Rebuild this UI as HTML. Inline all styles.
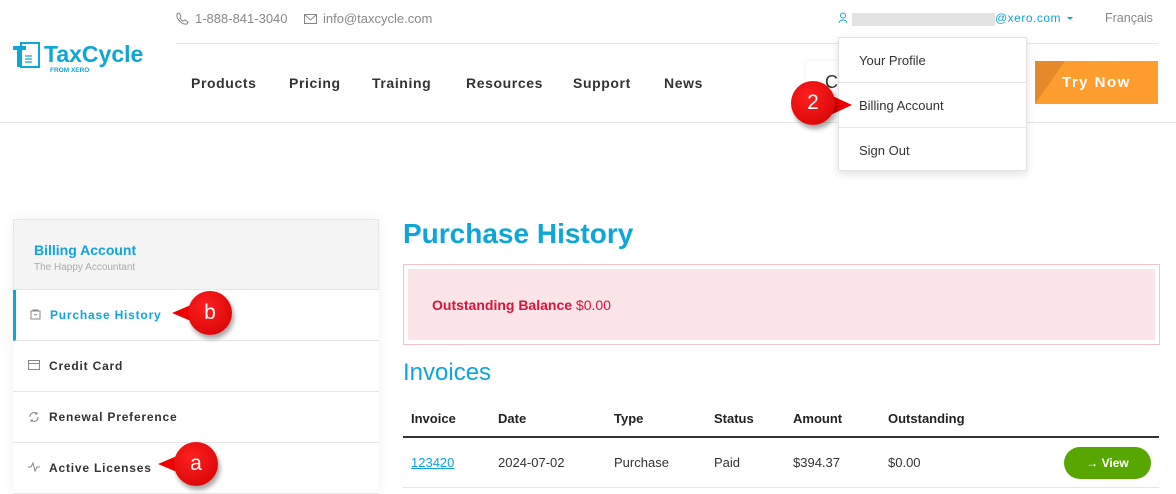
<!DOCTYPE html>
<html><head><meta charset="utf-8"><style>
*{box-sizing:border-box;margin:0;padding:0}
body{width:1176px;height:494px;overflow:hidden;background:#fff;font-family:"Liberation Sans",sans-serif;position:relative;color:#333}
.a{position:absolute}
.nav{font-size:14px;font-weight:bold;letter-spacing:.6px;color:#333;top:75px}
.side{left:13px;width:366px;border-bottom:1px solid #e6e6e6;background:#fff;height:51px}
.side span{position:absolute;left:36px;top:18px;font-size:12px;font-weight:bold;letter-spacing:.8px;color:#333}
.side svg{position:absolute;left:15px;top:19px}
.th{top:411px;font-size:13px;font-weight:bold;color:#222}
.td{top:455px;font-size:13px;color:#333}
.badge{position:absolute;width:44px;height:44px;border-radius:50%;color:#fff;font-size:21px;text-align:center;line-height:44px;box-shadow:2px 4px 5px rgba(0,0,0,.35);background:radial-gradient(circle at 40% 35%,#ff2020,#d00000)}
</style></head><body>
<div class="a" style="left:0;top:122px;width:1176px;height:1px;background:#e6e6e6"></div>
<div class="a" style="left:176px;top:43px;width:982px;height:1px;background:#e6e6e6"></div>
<svg class="a" style="left:13px;top:42px" width="28" height="28" viewBox="0 0 28 28"><rect x="8" y="1" width="18" height="24" fill="none" stroke="#0ea5d8" stroke-width="2"/><rect x="0" y="4" width="13" height="4" fill="#0ea5d8"/><rect x="4" y="4" width="4" height="21" fill="#0ea5d8"/><path d="M12 14h7M12 17h7M12 20h7" stroke="#0ea5d8" stroke-width="1.3"/></svg>
<div class="a" style="left:44px;top:41px;font-size:23px;color:#0ea5d8;font-weight:bold">TaxCycle</div>
<div class="a" style="left:50px;top:67px;font-size:6.5px;color:#0ea5d8;font-weight:bold">FROM XERO</div>
<svg class="a" style="left:176px;top:12px" width="13" height="13" viewBox="0 0 13 13"><path d="M3 1l2 3-1 2c1 2 2 3 3 3l2-1 3 2-1 2C6 13 0 7 1 2z" fill="none" stroke="#888" stroke-width="1"/></svg>
<div class="a" style="left:195px;top:11px;font-size:13px;color:#888">1-888-841-3040</div>
<svg class="a" style="left:304px;top:14px" width="13" height="10"><rect x=".5" y=".5" width="12" height="9" fill="none" stroke="#888"/><path d="M1 1l5.5 5 5.5-5" fill="none" stroke="#888"/></svg>
<div class="a" style="left:323px;top:11px;font-size:13px;color:#888">info@taxcycle.com</div>
<div class="a nav" style="left:191px">Products</div>
<div class="a nav" style="left:289px">Pricing</div>
<div class="a nav" style="left:372px">Training</div>
<div class="a nav" style="left:466px">Resources</div>
<div class="a nav" style="left:573px">Support</div>
<div class="a nav" style="left:664px">News</div>
<div class="a" style="left:806px;top:61px;width:32px;height:44px;background:#fff;box-shadow:0 0 3px rgba(0,0,0,.1)"></div>
<div class="a" style="left:825px;top:72px;font-size:18px;color:#333">C</div>
<svg class="a" style="left:838px;top:12px" width="10" height="12"><circle cx="5" cy="3.5" r="2.5" fill="none" stroke="#0ea5d8"/><path d="M1 11c0-4 8-4 8 0" fill="none" stroke="#0ea5d8"/></svg>
<div class="a" style="left:852px;top:13px;width:143px;height:13px;background:#e3e3e3"></div>
<div class="a" style="left:995px;top:11px;font-size:12px;color:#0ea5d8;letter-spacing:.5px">@xero.com</div>
<div class="a" style="left:1067px;top:17px;border:3px solid transparent;border-top:3px solid #0ea5d8"></div>
<div class="a" style="left:1105px;top:11px;font-size:12.5px;color:#888">Français</div>
<div class="a" style="left:1035px;top:61px;width:123px;height:43px;background:#ff9d2e;overflow:hidden"><div style="position:absolute;left:0;top:0;width:0;height:0;border-top:43px solid #e58a2a;border-right:30px solid transparent"></div><div style="position:absolute;left:27px;top:13px;color:#fff;font-size:15px;font-weight:bold;letter-spacing:1.5px">Try Now</div></div>
<div class="a" style="left:838px;top:37px;width:189px;height:134px;background:#fff;border:1px solid #e3e3e3;box-shadow:0 3px 8px rgba(0,0,0,.12)">
<div style="position:absolute;left:20px;top:15px;font-size:13px;color:#333">Your Profile</div>
<div style="position:absolute;left:0;top:44px;width:187px;height:1px;background:#e6e6e6"></div>
<div style="position:absolute;left:20px;top:60px;font-size:13px;color:#333">Billing Account</div>
<div style="position:absolute;left:0;top:89px;width:187px;height:1px;background:#e6e6e6"></div>
<div style="position:absolute;left:20px;top:105px;font-size:13px;color:#333">Sign Out</div>
</div>
<div class="a" style="left:13px;top:219px;width:366px;height:275px;box-shadow:0 0 12px rgba(0,0,0,.06)"></div>
<div class="a" style="left:13px;top:219px;width:366px;height:71px;background:#f4f4f4;border:1px solid #e6e6e6"></div>
<div class="a" style="left:34px;top:242px;font-size:14px;font-weight:bold;color:#0ea5d8">Billing Account</div>
<div class="a" style="left:34px;top:262px;font-size:10px;color:#aaa">The Happy Accountant</div>
<div class="a side" style="top:290px;border-left:3px solid #0ea5d8"><svg width="11" height="11" style="left:14px"><rect x="1" y="2" width="9" height="8" fill="none" stroke="#888"/><path d="M3 2V1h5v1M4 5q1.5 2 3 0" fill="none" stroke="#888"/></svg><span style="color:#0ea5d8;left:34px">Purchase History</span></div>
<div class="a side" style="top:341px"><svg width="12" height="10"><rect x=".5" y=".5" width="11" height="9" fill="none" stroke="#888"/><path d="M1 3.5h10" stroke="#888"/></svg><span>Credit Card</span></div>
<div class="a side" style="top:392px"><svg width="12" height="12"><path d="M2 6a4 4 0 0 1 7-3M10 6a4 4 0 0 1-7 3M9 1v2H7M3 11V9h2" fill="none" stroke="#888"/></svg><span>Renewal Preference</span></div>
<div class="a side" style="top:443px"><svg width="12" height="10"><path d="M0 5h3l2-4 2 8 2-4h3" fill="none" stroke="#888"/></svg><span>Active Licenses</span></div>
<div class="a" style="left:403px;top:218px;font-size:28px;font-weight:bold;color:#0ea5d8">Purchase History</div>
<div class="a" style="left:403px;top:264px;width:757px;height:81px;border:1px solid #f5c3cc;padding:4px"><div style="width:100%;height:100%;background:#fbe5e8"></div></div>
<div class="a" style="left:432px;top:297px;font-size:14px;color:#d9143a"><b>Outstanding Balance</b> $0.00</div>
<div class="a" style="left:403px;top:359px;font-size:24px;color:#0ea5d8">Invoices</div>
<div class="a th" style="left:411px">Invoice</div>
<div class="a th" style="left:498px">Date</div>
<div class="a th" style="left:614px">Type</div>
<div class="a th" style="left:714px">Status</div>
<div class="a th" style="left:793px">Amount</div>
<div class="a th" style="left:888px">Outstanding</div>
<div class="a" style="left:403px;top:436px;width:756px;height:2px;background:#333"></div>
<div class="a td" style="left:411px;color:#0ea5d8;text-decoration:underline">123420</div>
<div class="a td" style="left:498px">2024-07-02</div>
<div class="a td" style="left:614px">Purchase</div>
<div class="a td" style="left:714px">Paid</div>
<div class="a td" style="left:793px">$394.37</div>
<div class="a td" style="left:888px">$0.00</div>
<div class="a" style="left:1064px;top:447px;width:87px;height:32px;background:#58a700;border-radius:16px;color:#fff;font-size:12px;font-weight:bold;text-align:center;line-height:32px">→ View</div>
<div class="a" style="left:403px;top:487px;width:756px;height:1px;background:#e6e6e6"></div>
<div class="a" style="left:826px;top:93px;border:12px solid transparent;border-left:26px solid #e00;border-right:0"></div>
<div class="badge" style="left:791px;top:81px">2</div>
<div class="a" style="left:172px;top:302px;border:11px solid transparent;border-right:26px solid #e00;border-left:0"></div>
<div class="badge" style="left:188px;top:291px">b</div>
<div class="a" style="left:158px;top:453px;border:11px solid transparent;border-right:26px solid #e00;border-left:0"></div>
<div class="badge" style="left:174px;top:442px">a</div>
</body></html>
